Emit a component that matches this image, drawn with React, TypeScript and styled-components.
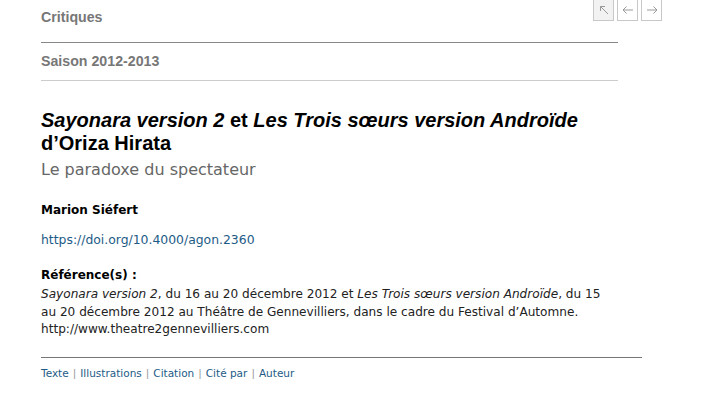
import React from "react";
import styled, { createGlobalStyle } from "styled-components";

const Global = createGlobalStyle`
  html, body { margin: 0; padding: 0; background: #fff; }
  body { font-family: "DejaVu Sans", Verdana, sans-serif; color: #222; }
`;

const Page = styled.div`
  position: relative;
  padding: 0 0 0 41px;
  width: 601px;
`;

const Nav = styled.div`
  position: absolute;
  top: -1px;
  left: 593px;
  display: flex;
  gap: 3px;
`;

const NavButton = styled.a<{ $active?: boolean }>`
  width: 19px;
  height: 20px;
  border: 1px solid #c8c8c8;
  background: ${(p) => (p.$active ? "#f2f2f2" : "#fff")};
  display: flex;
  align-items: center;
  justify-content: center;
  color: #999;
`;

const Section = styled.div<{ $line: string }>`
  width: 577px;
  font-family: "Liberation Sans", Arial, sans-serif;
  font-weight: bold;
  font-size: 14.2px;
  color: #777;
  border-bottom: 1px solid ${(p) => p.$line};
  height: 43px;
  box-sizing: border-box;
  padding-top: 9px;
`;

const Section2 = styled(Section)`
  height: 38px;
  padding-top: 10px;
`;

const Title = styled.h1`
  margin: 28px 0 0;
  font-family: "Liberation Sans", Arial, sans-serif;
  font-weight: bold;
  font-size: 20px;
  line-height: 23px;
  color: #000;
  em { font-style: italic; }
`;

const Subtitle = styled.div`
  margin-top: 5px;
  font-size: 16px;
  color: #666;
`;

const Author = styled.div`
  margin-top: 24px;
  font-weight: bold;
  font-size: 12px;
  color: #000;
`;

const Doi = styled.a`
  display: block;
  margin-top: 15px;
  font-size: 12.4px;
  color: #1d5b86;
  text-decoration: none;
`;

const RefLabel = styled.div`
  margin-top: 21px;
  font-weight: bold;
  font-size: 12px;
  color: #000;
`;

const RefText = styled.p`
  margin: 4px 0 0;
  width: 575px;
  font-size: 12.1px;
  line-height: 17.5px;
  color: #222;
`;

const Footer = styled.div`
  margin-top: 18px;
  border-top: 1px solid #777;
  padding-top: 9px;
  font-size: 10.5px;
  color: #999;
  display: flex;
  gap: 4px;
`;

const FooterLink = styled.a`
  color: #1d5b86;
  text-decoration: none;
`;

const Arrow = ({ d }: { d: string }) => (
  <svg width="12" height="12" viewBox="0 0 12 12" fill="none" stroke="#999" strokeWidth="1">
    <path d={d} />
  </svg>
);

export default function App() {
  const links = ["Texte", "Illustrations", "Citation", "Cité par", "Auteur"];
  return (
    <>
      <Global />
      <Page>
        <Nav>
          <NavButton $active>
            <Arrow d="M2.5 2.5 L10 10 M2.5 2.5 H7 M2.5 2.5 V7" />
          </NavButton>
          <NavButton>
            <Arrow d="M1 6 H11 M1 6 L4.5 2.5 M1 6 L4.5 9.5" />
          </NavButton>
          <NavButton>
            <Arrow d="M1 6 H11 M11 6 L7.5 2.5 M11 6 L7.5 9.5" />
          </NavButton>
        </Nav>
        <Section $line="#888">Critiques</Section>
        <Section2 $line="#ccc">Saison 2012-2013</Section2>
        <Title>
          <em>Sayonara version 2</em> et <em>Les Trois sœurs version Androïde</em>
          <br />d’Oriza Hirata
        </Title>
        <Subtitle>Le paradoxe du spectateur</Subtitle>
        <Author>Marion Siéfert</Author>
        <Doi href="#">https://doi.org/10.4000/agon.2360</Doi>
        <RefLabel>Référence(s) :</RefLabel>
        <RefText>
          <em>Sayonara version 2</em>, du 16 au 20 décembre 2012 et <em>Les Trois sœurs version Androïde</em>, du 15 au 20 décembre 2012 au Théâtre de Gennevilliers, dans le cadre du Festival d’Automne. http://www.theatre2gennevilliers.com
        </RefText>
        <Footer>
          {links.map((l, i) => (
            <React.Fragment key={l}>
              {i > 0 && <span>|</span>}
              <FooterLink href="#">{l}</FooterLink>
            </React.Fragment>
          ))}
        </Footer>
      </Page>
    </>
  );
}
